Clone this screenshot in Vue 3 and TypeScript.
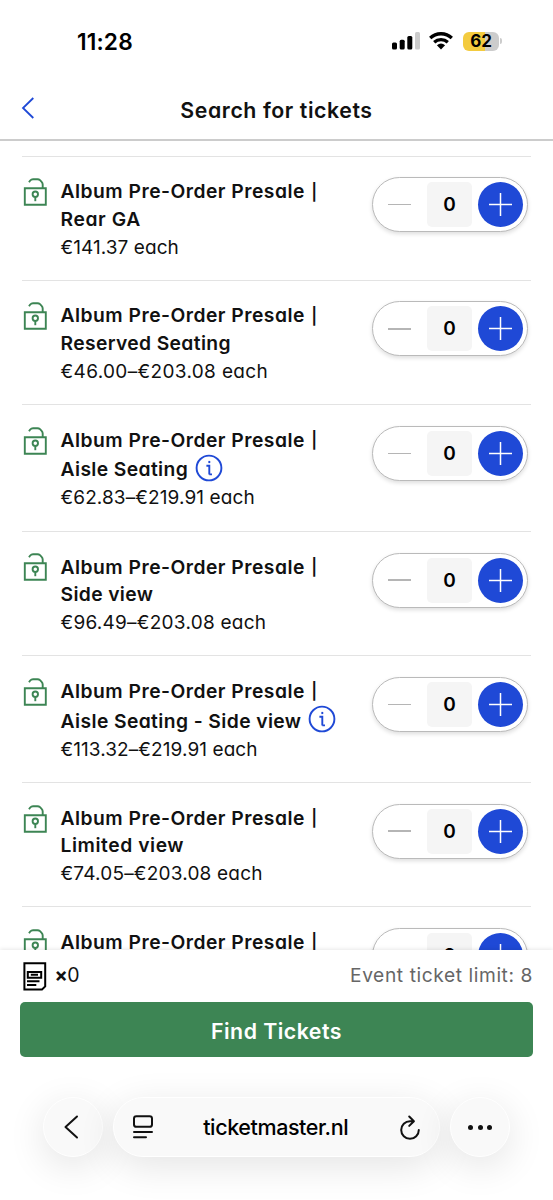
<script setup lang="ts">
import { ref } from 'vue'

interface Ticket {
  name?: string
  price?: string
  info?: boolean
  nameTrack: number
  priceTrack: number
  count: number
}

const tickets = ref<Ticket[]>([
  { name: 'Rear GA', price: '€141.37 each', nameTrack: 0.6, priceTrack: 0.06, count: 0 },
  { name: 'Reserved Seating', price: '€46.00–€203.08 each', nameTrack: 0.36, priceTrack: 0.35, count: 0 },
  { name: 'Aisle Seating', price: '€62.83–€219.91 each', info: true, nameTrack: 0.38, priceTrack: 0.1, count: 0 },
  { name: 'Side view', price: '€96.49–€203.08 each', nameTrack: 0.35, priceTrack: 0.25, count: 0 },
  { name: 'Aisle Seating - Side view', price: '€113.32–€219.91 each', info: true, nameTrack: 0.4, priceTrack: 0.08, count: 0 },
  { name: 'Limited view', price: '€74.05–€203.08 each', nameTrack: 0.55, priceTrack: 0.2, count: 0 },
  { nameTrack: 0, priceTrack: 0, count: 0 },
])
</script>

<template>
  <div class="phone">
    <div class="status">
      <span class="clock">11:28</span>
      <div class="indicators">
        <svg class="signal" viewBox="0 0 28 18" width="28" height="18">
          <rect x="0" y="10.5" width="5" height="7" rx="1.5" />
          <rect x="7.7" y="7.7" width="5" height="9.8" rx="1.5" />
          <rect x="15.3" y="4" width="5" height="13.5" rx="1.5" />
          <rect class="dim" x="23" y="0" width="5" height="17.5" rx="1.5" />
        </svg>
        <svg class="wifi" viewBox="0 0 24 18" width="24" height="18">
          <path d="M1.2 6C7.1 .3 16.9 .3 22.8 6M5.2 10.2C9 6.7 15 6.7 18.8 10.2" fill="none" stroke="#000" stroke-width="3.3" />
          <path d="M7.9 13.2Q12 9.9 16.1 13.2L12 17.5Z" />
        </svg>
        <div class="battery"><span>62</span></div>
        <i class="nub"></i>
      </div>
    </div>

    <header class="header">
      <svg class="back" viewBox="0 0 14 22" width="14" height="22"><path d="M12.3 1L2 11L12.3 21" /></svg>
      <h1>Search for tickets</h1>
    </header>

    <main class="list">
      <section v-for="(t, i) in tickets" :key="i" class="row" :class="{ tall: t.info }">
        <svg class="lock" viewBox="0 0 24 30" width="24" height="30">
          <path d="M1.8 11.3H22.8V27.8H1.8ZM6 5.3L7.2 3.5Q8.3 2.2 10 2.2H14.5Q16 2.2 17 3.2L18.6 4.8Q19.7 5.9 19.7 7.5V11.3" />
          <circle cx="12.3" cy="17.2" r="2.7" />
          <path d="M12.3 20V24.2" />
        </svg>
        <div class="text">
          <div class="name first">Album Pre-Order Presale <span class="bar">|</span></div>
          <div v-if="t.name" class="name second" :style="{ letterSpacing: t.nameTrack + 'px' }">
            <span>{{ t.name }}</span>
            <svg v-if="t.info" class="info" viewBox="0 0 28 28" width="28" height="28">
              <circle cx="14" cy="14" r="12.4" />
              <path d="M11.4 11.7H14.3V20.4M14.3 20.4H17" />
              <path d="M14.3 6.9V9.1" />
            </svg>
          </div>
          <div v-if="t.price" class="price" :style="{ letterSpacing: t.priceTrack + 'px' }">{{ t.price }}</div>
        </div>
        <div class="stepper">
          <button class="minus" aria-label="Remove ticket"></button>
          <span class="count">{{ t.count }}</span>
          <button class="plus" aria-label="Add ticket" @click="t.count++">
            <svg viewBox="0 0 45 45" width="45" height="45"><path d="M11 22.5H34M22.5 11V34" /></svg>
          </button>
        </div>
      </section>
    </main>

    <footer class="footer">
      <div class="summary">
        <svg class="ticket" viewBox="0 0 24 29" width="24" height="29">
          <path d="M1.4 1.3H22.2V24.4L19 27.5H1.4Z" />
          <path d="M4.8 9.9H18.2V15.8H4.8ZM7.8 12.8H15M4 19.2H16.5M4 22.9H13.3" />
        </svg>
        <span class="qty">×0</span>
        <span class="limit">Event ticket limit: 8</span>
      </div>
      <button class="find">Find Tickets</button>
      <nav class="browser">
        <div class="glass round">
          <svg viewBox="0 0 60 60" width="60" height="60"><path d="M34 19.5L22.5 30L34 40.5" /></svg>
        </div>
        <div class="glass address">
          <svg class="reader" viewBox="0 0 20 24" width="20" height="24">
            <rect x="1" y="1.2" width="18" height="10.6" rx="2.4" />
            <path d="M1 16.9H19M1 22.3H13" />
          </svg>
          <span class="host">ticketmaster.nl</span>
          <svg class="reload" viewBox="0 0 22 25" width="22" height="25">
            <path d="M14.6 6.2H11A8.8 8.8 0 1 0 19.8 15M10.2 1.5L14.9 6.2L10.2 10.9" />
          </svg>
        </div>
        <div class="glass round dots"><i></i><i></i><i></i></div>
      </nav>
    </footer>
  </div>
</template>

<style>
body {
  margin: 0;
  background: #fff;
}
</style>

<style scoped>
.phone {
  width: 553px;
  height: 1200px;
  display: flex;
  flex-direction: column;
  overflow: hidden;
  background: #fff;
  color: #111;
  font-family: Inter, "Liberation Sans", sans-serif;
  font-feature-settings: "cv11" 1;
}
button {
  border: 0;
  padding: 0;
  font: inherit;
}
svg {
  display: block;
  flex: none;
}
.status {
  height: 82px;
  flex: none;
  box-sizing: border-box;
  padding: 0 51px 0 77px;
  display: flex;
  align-items: center;
  justify-content: space-between;
  color: #000;
}
.clock {
  font-size: 22.7px;
  font-weight: 560;
  letter-spacing: 0.15px;
}
.indicators {
  display: flex;
  align-items: center;
}
.signal .dim {
  fill: #ccc;
}
.wifi {
  margin-left: 9px;
}
.battery {
  width: 36px;
  height: 19px;
  margin-left: 10px;
  border-radius: 6px;
  background: linear-gradient(90deg, #f3cb3f 62%, #ccc 62%);
  font-size: 17px;
  line-height: 19px;
  font-weight: 700;
  text-align: center;
}
.nub {
  width: 2px;
  height: 6px;
  margin-left: 1px;
  border-radius: 0 2px 2px 0;
  background: #ccc;
}
.header {
  height: 59px;
  flex: none;
  box-sizing: border-box;
  border-bottom: 2px solid #ccc;
  padding: 0 35px 0 21px;
  display: flex;
  align-items: center;
}
.back {
  margin-top: -6px;
  fill: none;
  stroke: #1f49d6;
  stroke-width: 1.8;
}
h1 {
  flex: 1;
  margin: -2px 0 0;
  text-align: center;
  font-size: 21.3px;
  line-height: 28px;
  font-weight: 560;
  letter-spacing: 0.58px;
}
.list {
  height: 809px;
  flex: none;
  box-sizing: border-box;
  overflow: hidden;
  padding: 14.7px 22px 0;
}
.row {
  height: 124.3px;
  box-sizing: border-box;
  border-top: 1px solid #e3e3e3;
  padding: 20.5px 3px 0 0;
  display: flex;
  align-items: flex-start;
}
.row.tall {
  height: 126.8px;
}
.lock {
  margin: -0.1px 14px 0 0.5px;
  fill: none;
  stroke: #3d8554;
  stroke-width: 1.9;
}
.text {
  flex: 1;
  min-width: 0;
  padding-top: 1px;
  white-space: nowrap;
}
.name {
  height: 27.7px;
  line-height: 27.7px;
  font-size: 19.3px;
  font-weight: 560;
  display: flex;
}
.first {
  display: block;
  letter-spacing: 0.48px;
}
.bar {
  font-size: 16.5px;
  vertical-align: 0.5px;
  line-height: 1;
  margin-left: 1px;
}
.tall .second {
  height: 30px;
  line-height: 31.4px;
}
.info {
  margin: -0.6px 0 0 6.5px;
  fill: none;
  stroke: #1f49d6;
  stroke-width: 1.9;
}
.price {
  height: 27.7px;
  line-height: 27.7px;
  font-size: 19px;
}
.stepper {
  width: 156px;
  height: 55px;
  flex: none;
  box-sizing: border-box;
  border: 1.3px solid #bababa;
  border-radius: 28px;
  padding-right: 4px;
  display: flex;
  align-items: center;
  box-shadow: 0 2px 4px #0002;
  background: #fff;
}
.minus {
  width: 23px;
  height: 1.5px;
  margin: 0 16px 0 15px;
  background: #b5b5b5;
}
.count {
  width: 45px;
  height: 45px;
  border-radius: 5px;
  background: #f5f5f5;
  color: #000;
  font-size: 19px;
  line-height: 46px;
  font-weight: 560;
  text-align: center;
}
.plus {
  width: 45px;
  height: 45px;
  margin-left: auto;
  border-radius: 50%;
  background: #1f49d6;
}
.plus path {
  stroke: #fff;
  stroke-width: 1.5;
}
.footer {
  height: 250px;
  flex: none;
  background: #fff;
  box-shadow: 0 -1px 4px #00000018;
  z-index: 1;
}
.summary {
  height: 52px;
  box-sizing: border-box;
  padding: 0 20px 0 23px;
  display: flex;
  align-items: center;
}
.ticket {
  fill: none;
  stroke: #000;
  stroke-width: 2;
}
.qty {
  margin: -2px 0 0 7.5px;
  font-size: 19.5px;
  line-height: 28px;
  letter-spacing: -0.5px;
}
.qty::first-letter {
  font-weight: 700;
}
.limit {
  margin: -3px 0 0 auto;
  color: #666;
  font-size: 19.2px;
  letter-spacing: 0.58px;
}
.find {
  display: block;
  width: 513px;
  height: 55px;
  margin-left: 20px;
  padding-top: 2px;
  border-radius: 5px;
  background: #3d8554;
  color: #fff;
  font-size: 21.3px;
  font-weight: 560;
  letter-spacing: 0.48px;
}
.browser {
  height: 143px;
  box-sizing: border-box;
  padding: 40px 43px 0;
  display: flex;
  gap: 10px;
}
.glass {
  height: 60px;
  box-sizing: border-box;
  border: 1px solid #fff;
  border-radius: 30px;
  background: #f9f9f9;
  box-shadow: 0 9px 38px #0000001c;
  display: flex;
  align-items: center;
}
.round {
  width: 60px;
  flex: none;
  justify-content: center;
}
.glass path,
.glass rect {
  fill: none;
  stroke: #111;
  stroke-width: 2;
  stroke-linecap: round;
  stroke-linejoin: round;
}
.address {
  flex: 1;
  padding: 0 18.5px 0 19px;
  justify-content: space-between;
}
.host {
  font-feature-settings: normal;
  font-size: 21.5px;
  font-weight: 500;
  letter-spacing: -0.4px;
  color: #000;
}
.dots {
  gap: 4.7px;
}
.dots i {
  width: 5px;
  height: 5px;
  border-radius: 50%;
  background: #111;
}
</style>
